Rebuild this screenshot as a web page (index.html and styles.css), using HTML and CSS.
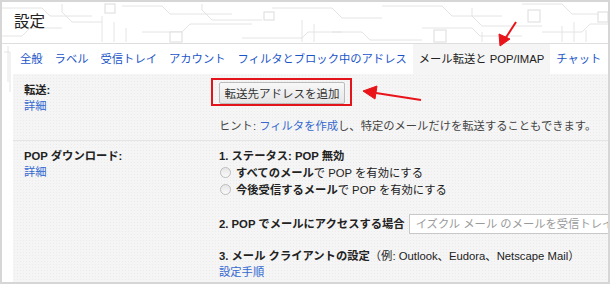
FILE: index.html
```html
<!DOCTYPE html>
<html lang="ja">
<head>
  <meta charset="UTF-8" />
  <title>設定</title>
  <link rel="stylesheet" href="styles.css">
</head>
<body>
  <div class="frame">
    <!-- circuit board theme behind the header -->
    <svg class="circuit" width="606" height="90" viewBox="0 0 606 90">
      <g fill="none" stroke="#e4e4e4" stroke-width="1">
        <path d="M0 6 H40 L48 14 H90 M0 34 H20 L28 26 H60 M2 50 H8 V90 M6 44 V80"/>
        <path d="M60 2 V10 L70 20 H100 M120 4 H160 L168 12 H230 M140 30 H180 L188 22 H250"/>
        <path d="M200 2 V8 L210 18 H260 M240 36 H300 L306 30 H340 M270 6 H330 L340 16 H380"/>
        <path d="M330 30 H360 L368 38 H420 M380 4 H440 L450 14 H500 M420 26 H470 L478 34 H520"/>
        <path d="M470 6 V14 L480 24 H540 M520 2 H560 L570 12 H606 M540 30 H580 L588 22 H606"/>
        <path d="M100 14 V40 M112 20 V40 M124 26 V40 M300 18 V40 M312 22 V40 M480 30 V40 M560 24 V40 M572 20 V40 M584 28 V40"/>
      </g>
      <g fill="#fff" stroke="#dcdcdc">
        <rect x="103" y="2" width="10" height="9"/>
        <rect x="168" y="30" width="12" height="10"/>
        <rect x="262" y="10" width="10" height="8"/>
        <rect x="432" y="28" width="12" height="12"/>
        <rect x="526" y="8" width="12" height="12"/>
        <rect x="596" y="10" width="10" height="10"/>
      </g>
    </svg>

    <!-- red annotation arrows -->
    <svg class="marks" width="606" height="280" viewBox="0 0 606 280">
      <g stroke="#e8141a" stroke-width="2" fill="#e8141a">
        <line x1="514" y1="20" x2="503" y2="37"/>
        <polygon points="498,44 497,32 508,37" stroke-width="1"/>
        <line x1="419" y1="98" x2="374" y2="91"/>
        <polygon points="361,89 375,84 373,97" stroke-width="1"/>
      </g>
    </svg>

    <header class="top">
      <h1>設定</h1>
    </header>

    <div class="panel">
      <nav class="tabs">
        <a class="tab">全般</a>
        <a class="tab">ラベル</a>
        <a class="tab">受信トレイ</a>
        <a class="tab">アカウント</a>
        <a class="tab">フィルタとブロック中のアドレス</a>
        <a class="tab active">メール転送と POP/IMAP</a>
        <a class="tab">チャット</a>
      </nav>

      <div class="content">
        <div class="row first">
          <div class="label">
            <b>転送:</b>
            <a class="link">詳細</a>
          </div>
          <div class="value">
            <div class="highlight"><button class="btn">転送先アドレスを追加</button></div>
            <p class="hint">ヒント: <a class="link">フィルタを作成</a>し、特定のメールだけを転送することもできます。</p>
          </div>
        </div>

        <div class="row second">
          <div class="label">
            <b>POP ダウンロード:</b>
            <a class="link">詳細</a>
          </div>
          <div class="value">
            <b class="line">1. ステータス: POP 無効</b>
            <label class="radio"><span class="dot"></span><b>すべてのメール</b>で POP を有効にする</label>
            <label class="radio"><span class="dot"></span><b>今後受信するメール</b>で POP を有効にする</label>
            <div class="access">
              <b>2. POP でメールにアクセスする場合</b>
              <span class="select">イズクル メール のメールを受信トレイに残す</span>
            </div>
            <p class="client"><b>3. メール クライアントの設定</b>（例: Outlook、Eudora、Netscape Mail）</p>
            <a class="link">設定手順</a>
          </div>
        </div>
      </div>
    </div>
  </div>
</body>
</html>
```

FILE: styles.css
```css
body { margin: 0; font-family: "Liberation Sans", "Noto Sans CJK JP", sans-serif; font-size: 11.3px; line-height: 16px; color: #222; }
.frame { position: relative; width: 606px; height: 280px; border: 2px solid #d6d6d6; background: #fff; overflow: hidden; }
.circuit { position: absolute; left: 0; top: 0; }
.marks { position: absolute; left: 0; top: 0; z-index: 2; }
.top { position: relative; height: 41px; border-bottom: 1px solid #dedede; }
.top h1 { margin: 0; padding: 12px 0 0 12px; font-size: 15.5px; font-weight: normal; line-height: 16px; color: #222; }
.panel { position: relative; margin-left: 11px; height: 238px; background: #fff; }
.tabs { display: flex; height: 30px; align-items: stretch; white-space: nowrap; }
.tab { display: flex; align-items: center; padding: 0 6px; color: #1a55c8; }
.tab:first-child { padding-left: 7px; }
.tab.active { color: #222; background: #f5f5f5; }
.content { background-color: #f5f5f5; background-image: radial-gradient(#ebebeb 0.7px, transparent 0.9px); background-size: 3px 3px; height: 208px; }
.row { display: grid; grid-template-columns: 195px 1fr; padding-left: 11px; }
.row.first { padding-top: 4px; padding-bottom: 6px; border-bottom: 1px solid #e4e4e4; }
.row.second { padding-top: 7px; }
.row.first .label { padding-top: 4px; }
.label b, .label a { display: block; }
.link { color: #3468cf; }
.value { white-space: nowrap; }
.highlight { width: fit-content; margin-left: -8px; border: 2px solid #e3141a; padding: 2px 5px 0 6px; }
.btn { display: block; width: 126px; height: 22px; padding: 0; border: 1px solid #bcbcbc; border-radius: 2px; background: linear-gradient(#f8f8f8, #e6e6e6); font-family: inherit; font-size: 11.5px; color: #333; }
.hint { margin: 12px 0 0; color: #444; }
.line { display: block; }
.radio { display: flex; align-items: center; height: 17px; }
.dot { width: 9px; height: 9px; margin: 0 5px 0 1px; border: 1px solid #bdbdbd; border-radius: 50%; background: linear-gradient(#e6e6e6, #fafafa); }
.access { display: flex; align-items: center; gap: 4px; margin-top: 16px; height: 20px; }
.select { display: flex; align-items: center; height: 18px; width: 260px; padding-left: 6px; border: 1px solid #c9c9c9; background: #fff; color: #9a9a9a; }
.client { margin: 14px 0 0; }
```
